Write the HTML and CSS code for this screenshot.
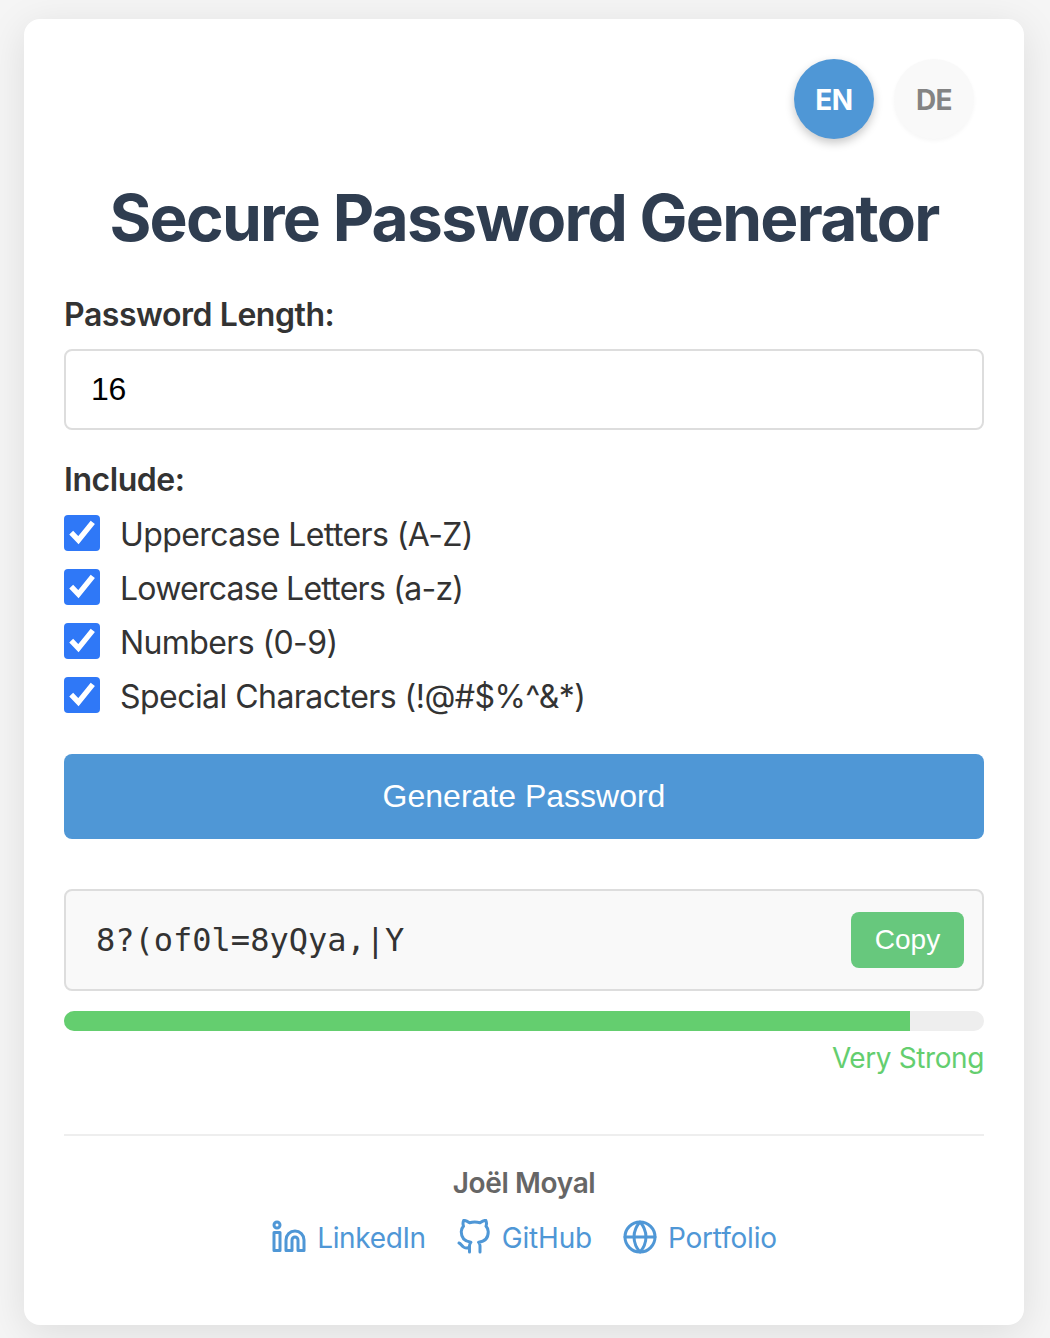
FILE: index.html
```html
<!DOCTYPE html>
<html lang="en">
<head>
<meta charset="utf-8">
<title>Secure Password Generator</title>
<link rel="stylesheet" href="styles.css">
</head>
<body>
<svg class="sprite" aria-hidden="true">
  <symbol id="check" viewBox="0 0 36 36">
    <path d="M7.200 17.700 14.400 25.200 28.800 7.400" fill="none" stroke="#fff" stroke-width="5.400"/>
  </symbol>
</svg>
<main class="card">
  <div class="languages">
    <button class="language language-active">EN</button>
    <button class="language">DE</button>
  </div>
  <h1 class="title">Secure Password Generator</h1>
  <label class="label" for="length">Password Length:</label>
  <input class="length-input" id="length" type="text" value="16">
  <div class="label include-label">Include:</div>
  <div class="options">
    <label class="option"><svg class="box"><use href="#check"/></svg><span class="option-text">Uppercase Letters (A-Z)</span></label>
    <label class="option"><svg class="box"><use href="#check"/></svg><span class="option-text option-lower">Lowercase Letters (a-z)</span></label>
    <label class="option"><svg class="box"><use href="#check"/></svg><span class="option-text">Numbers (0-9)</span></label>
    <label class="option"><svg class="box"><use href="#check"/></svg><span class="option-text option-special">Special Characters (!@#$%^&amp;*)</span></label>
  </div>
  <button class="generate">Generate Password</button>
  <div class="result">
    <span class="password">8?(of0l=8yQya,|Y</span>
    <button class="copy">Copy</button>
  </div>
  <div class="meter"><div class="meter-fill" style="width: 92%"></div></div>
  <div class="strength">Very Strong</div>
  <footer class="footer">
    <div class="author">Joël Moyal</div>
    <nav class="links">
      <a class="link"><svg class="icon" viewBox="0 0 24 24"><path d="M16 8a6 6 0 0 1 6 6v7h-4v-7a2 2 0 0 0-2-2 2 2 0 0 0-2 2v7h-4v-7a6 6 0 0 1 6-6z"/><rect x="2" y="9" width="4" height="12"/><circle cx="4" cy="4" r="2"/></svg><span class="link-text link-linkedin">LinkedIn</span></a>
      <a class="link"><svg class="icon" viewBox="0 0 24 24"><path d="M9 19c-5 1.500-5-2.500-7-3m14 6v-3.870a3.370 3.370 0 0 0-.94-2.610c3.140-.35 6.440-1.540 6.440-7A5.440 5.440 0 0 0 20 4.770 5.070 5.070 0 0 0 19.910 1S18.730.650 16 2.480a13.380 13.380 0 0 0-7 0C6.270.650 5.090 1 5.090 1A5.070 5.070 0 0 0 5 4.770a5.440 5.440 0 0 0-1.500 3.780c0 5.420 3.300 6.610 6.440 7A3.370 3.370 0 0 0 9 18.130V22"/></svg><span class="link-text">GitHub</span></a>
      <a class="link"><svg class="icon" viewBox="0 0 24 24"><circle cx="12" cy="12" r="10"/><path d="M2 12h20M12 2a15.300 15.300 0 0 1 4 10 15.300 15.300 0 0 1-4 10 15.300 15.300 0 0 1-4-10 15.300 15.300 0 0 1 4-10z"/></svg><span class="link-text">Portfolio</span></a>
    </nav>
  </footer>
</main>
</body>
</html>
```
FILE: styles.css
```css
* { box-sizing: border-box; }
html { background: #f5f5f5; }
body {
  margin: 0;
  height: 1338px;
  padding: 19px 26px 0 24px;
  overflow: hidden;
  background: #f5f5f5;
  color: #333;
  font: 32px/1.6 Inter, "Liberation Sans", sans-serif;
}
button, input { margin: 0; padding: 0; border: 0; }
.sprite { display: none; }
.card {
  display: flex;
  flex-direction: column;
  height: 1306px;
  padding: 40px;
  border-radius: 16px;
  background: #fff;
  box-shadow: 0 8px 40px rgba(0, 0, 0, .1);
}
.languages { display: flex; justify-content: flex-end; gap: 20px; padding-right: 10px; }
.language {
  width: 80px;
  height: 80px;
  padding-top: 2px;
  border-radius: 50%;
  background: #f9f9f9;
  color: #848484;
  box-shadow: 0 2px 4px rgba(0, 0, 0, .04);
  font: 700 28px/1 Inter, sans-serif;
  letter-spacing: -.5px;
}
.language-active { background: #4f97d6; color: #fff; box-shadow: 0 4px 10px rgba(0, 0, 0, .22); }
.title {
  margin: 39px 0 41px;
  line-height: 80px;
  font-size: 64px;
  font-weight: 700;
  color: #2f3d50;
  text-align: center;
  white-space: nowrap;
  letter-spacing: -1.72px;
}
.label { height: 51px; line-height: 49px; font-weight: 600; margin-top: -9px; letter-spacing: -.45px; }
.length-input {
  width: 920px;
  height: 81px;
  margin-top: 8px;
  padding: 0 25px;
  border: 2px solid #ddd;
  border-radius: 8px;
  background: #fff;
  color: #000;
  font: 32px "Liberation Sans", sans-serif;
  letter-spacing: -.4px;
}
.include-label { margin-top: 25px; }
.options { display: grid; gap: 18px; margin-top: 9px; }
.option { display: flex; align-items: center; gap: 20px; height: 36px; white-space: nowrap; }
.option-text { padding-top: 3px; letter-spacing: -.6px; }
.option-lower { letter-spacing: -.75px; }
.option-special { letter-spacing: -.54px; }
.box { width: 36px; height: 36px; border-radius: 4px; background: #2f78f7; }
.generate {
  flex: none;
  height: 85px;
  margin-top: 41px;
  border-radius: 8px;
  background: #4f97d6;
  color: #fff;
  font: 32px "Liberation Sans", sans-serif;
}
.result {
  display: flex;
  align-items: center;
  justify-content: space-between;
  height: 102px;
  margin-top: 50px;
  padding: 0 18px 0 30px;
  border: 2px solid #ddd;
  border-radius: 8px;
  background: #f9f9f9;
}
.password { font: 32px "DejaVu Sans Mono", monospace; }
.copy { width: 113px; height: 56px; border-radius: 8px; background: #67c87d; color: #fff; font: 28px "Liberation Sans", sans-serif; }
.meter { height: 20px; margin-top: 20px; border-radius: 10px; overflow: hidden; background: #eee; }
.meter-fill { height: 20px; background: #64ce6f; }
.strength { height: 45px; margin-top: 5px; line-height: 45px; font-size: 28px; text-align: right; color: #64ce6f; letter-spacing: -.4px; }
.footer { margin-top: 53px; padding-top: 25px; border-top: 2px solid #eee; font-size: 28px; text-align: center; }
.author { height: 45px; line-height: 45px; font-weight: 600; color: #666; letter-spacing: -.35px; }
.links { display: flex; justify-content: center; gap: 30px; margin-top: 8px; color: #4f97d6; }
.link { display: flex; align-items: center; gap: 10px; height: 46px; }
.link-text { padding-top: 2px; letter-spacing: -.2px; }
.link-linkedin { letter-spacing: -.35px; }
.icon { width: 36px; height: 36px; fill: none; stroke: #4f97d6; stroke-width: 2; stroke-linecap: round; stroke-linejoin: round; }
```
